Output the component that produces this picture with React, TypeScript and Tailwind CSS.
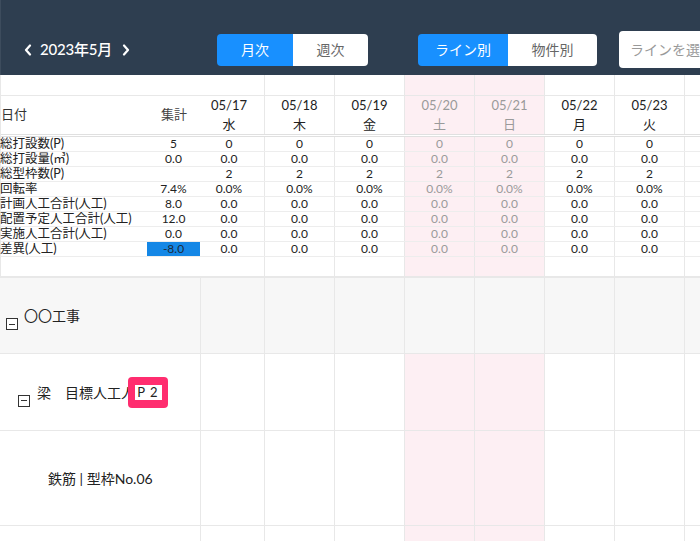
import React from "react";

type D = { d: string; w: string; we: boolean };
const dates: D[] = [
  { d: "05/17", w: "水", we: false },
  { d: "05/18", w: "木", we: false },
  { d: "05/19", w: "金", we: false },
  { d: "05/20", w: "土", we: true },
  { d: "05/21", w: "日", we: true },
  { d: "05/22", w: "月", we: false },
  { d: "05/23", w: "火", we: false },
  { d: "", w: "", we: false },
];

const rows: { label: string; total: string; day: string; hl?: boolean }[] = [
  { label: "総打設数(P)", total: "5", day: "0" },
  { label: "総打設量(㎥)", total: "0.0", day: "0.0" },
  { label: "総型枠数(P)", total: "", day: "2" },
  { label: "回転率", total: "7.4%", day: "0.0%" },
  { label: "計画人工合計(人工)", total: "8.0", day: "0.0" },
  { label: "配置予定人工合計(人工)", total: "12.0", day: "0.0" },
  { label: "実施人工合計(人工)", total: "0.0", day: "0.0" },
  { label: "差異(人工)", total: "-8.0", day: "0.0", hl: true },
];

function DateCells({
  render,
  gray,
  first,
}: {
  render?: (d: D, i: number) => React.ReactNode;
  gray?: boolean;
  first?: number;
}) {
  return (
    <>
      {dates.map((d, i) => (
        <div
          key={i}
          className={
            "shrink-0 h-full border-r border-[#e8e8e8] flex flex-col items-center justify-center " +
            (i === 0 ? (first === 64 ? "w-[64px]" : "w-[65px] pr-[6px]") : i === 7 ? "w-[40px]" : "w-[70px]") +
            " " +
            (gray ? "bg-[#f7f7f7]" : d.we ? "bg-[#fdeff3] text-[#9a9a9a]" : "text-[#222]")
          }
        >
          {render && i < 7 ? render(d, i) : null}
        </div>
      ))}
    </>
  );
}

function MinusBox() {
  return (
    <span className="inline-flex w-[12px] h-[12px] border border-[#333] items-center justify-center shrink-0 bg-white">
      <span className="block w-[6px] h-[1px] bg-[#333]" />
    </span>
  );
}

function Chevron({ dir }: { dir: "l" | "r" }) {
  return (
    <svg width="8" height="12" viewBox="0 0 8 12" fill="none">
      {dir === "l" ? (
        <path d="M6 1.5 L2 6 L6 10.5" stroke="white" strokeWidth="2.2" strokeLinecap="round" strokeLinejoin="round" />
      ) : (
        <path d="M2 1.5 L6 6 L2 10.5" stroke="white" strokeWidth="2.2" strokeLinecap="round" strokeLinejoin="round" />
      )}
    </svg>
  );
}

export default function App() {
  return (
    <div
      className="w-[700px] h-[541px] overflow-hidden bg-white"
      style={{ fontFamily: "Lato, 'Noto Sans CJK JP', sans-serif" }}
    >
      {/* Header */}
      <div className="h-[75px] bg-[#2e3e50] flex items-center pt-[24px] border-l border-[#3d4c5d]">
        <div className="w-[216px] shrink-0 flex items-center pl-[23px] text-white">
          <Chevron dir="l" />
          <span className="ml-[8px] text-[15px] font-medium tracking-[-0.2px]">2023年5月</span>
          <span className="ml-[10px]">
            <Chevron dir="r" />
          </span>
        </div>
        <div className="shrink-0 flex h-[32px] text-[14px] rounded-[4px] overflow-hidden">
          <div className="w-[76px] bg-[#1890ff] text-white flex items-center justify-center">月次</div>
          <div className="w-[75px] bg-white text-[#666] flex items-center justify-center">週次</div>
        </div>
        <div className="shrink-0 ml-[50px] flex h-[32px] text-[14px] rounded-[4px] overflow-hidden">
          <div className="w-[90px] bg-[#1890ff] text-white flex items-center justify-center">ライン別</div>
          <div className="w-[89px] bg-white text-[#666] flex items-center justify-center">物件別</div>
        </div>
        <div className="shrink-0 ml-[22px] w-[82px] h-[37px] bg-white rounded-l-[4px] flex items-center pl-[11px] text-[14px] text-[#999] whitespace-nowrap overflow-hidden">
          ラインを選
        </div>
      </div>

      {/* Summary section */}
      <div className="border-l border-[#e8e8e8]">
        <div className="flex h-[21px] border-b border-[#e8e8e8]">
          <div className="w-[199px] shrink-0" />
          <DateCells />
        </div>
        <div className="flex h-[41px] border-b-[3px] border-double border-[#e0e0e0] text-[13px]">
          <div className="w-[147px] shrink-0 flex items-center text-[#333]">日付</div>
          <div className="w-[52px] shrink-0 flex items-center justify-center text-[#444]">集計</div>
          <DateCells
            render={(d) => (
              <>
                <span className="leading-[19px]">{d.d}</span>
                <span className="leading-[19px]">{d.w}</span>
              </>
            )}
          />
        </div>
        {rows.map((r, ri) => (
          <div key={ri} className="flex h-[15px] border-b border-[#ededed] text-[12px] leading-[14px] text-[#222]">
            <div className="w-[147px] shrink-0 whitespace-nowrap -ml-[1px] text-[12.5px]">{r.label}</div>
            <div
              className={
                "w-[53px] shrink-0 text-center " + (r.hl ? "bg-[#1487e6] text-[#1c2a3a]" : "")
              }
            >
              {r.total}
            </div>
            <DateCells render={() => <span>{r.day}</span>} />
          </div>
        ))}
        <div className="flex h-[19px]">
          <div className="w-[199px] shrink-0" />
          <DateCells />
        </div>
      </div>

      {/* Tree section */}
      <div className="border-t-2 border-[#e8e8e8] text-[14px] text-[#222]">
        <div className="flex h-[76px] border-b border-[#e8e8e8] bg-[#f7f7f7]">
          <div className="w-[201px] shrink-0 border-r border-[#e8e8e8] flex items-center pl-[6px]">
            <span className="mt-[8px]">
              <MinusBox />
            </span>
            <span className="ml-[6px]">〇〇工事</span>
          </div>
          <DateCells gray first={64} />
        </div>
        <div className="flex h-[77px] border-b border-[#e8e8e8]">
          <div className="relative w-[201px] shrink-0 border-r border-[#e8e8e8] flex items-center pl-[18px] whitespace-nowrap">
            <span className="mt-[8px]">
              <MinusBox />
            </span>
            <span className="ml-[7px]">梁　目標人工人</span>
            <div className="absolute left-[128px] top-[23px] w-[40px] h-[31px] rounded-[4px] bg-[#ff2d6f] flex items-center justify-center">
              <div className="w-[27px] h-[15px] bg-white flex items-center justify-center text-[13px] leading-none text-[#222] tracking-[1px]">
                P 2
              </div>
            </div>
          </div>
          <DateCells first={64} />
        </div>
        <div className="flex h-[95px] border-b border-[#e8e8e8]">
          <div className="w-[201px] shrink-0 border-r border-[#e8e8e8] flex items-center pl-[48px] whitespace-nowrap">
            鉄筋 | 型枠No.06
          </div>
          <DateCells first={64} />
        </div>
        <div className="flex h-[30px]">
          <div className="w-[201px] shrink-0 border-r border-[#e8e8e8]" />
          <DateCells first={64} />
        </div>
      </div>
    </div>
  );
}
